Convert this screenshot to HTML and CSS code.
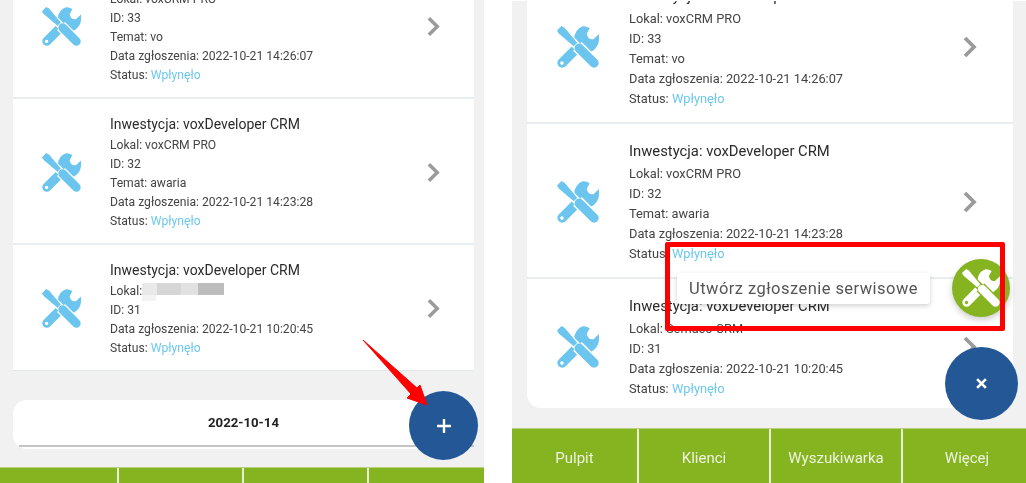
FILE: index.html
```html
<!DOCTYPE html>
<html lang="pl">
<head>
<meta charset="utf-8">
<title>Zgłoszenia serwisowe</title>
<link rel="stylesheet" href="styles.css">
</head>
<body>
<svg class="defs" width="0" height="0" aria-hidden="true">
  <symbol id="tools" viewBox="0 0 39 39">
    <path class="t-fill" d="M24 .3A12 12 0 0 0 16 11.5L27 25A13 13 0 0 0 39 12.5L39 7.5 33.8 12.2Q28.6 13 27.6 7.2L30.4 2Q27 0 24 .3Z"/>
    <path class="t-line" stroke-width="9" d="M4.8 34.2 18 21"/>
    <path class="t-gap" stroke-width="7.6" d="M4 4 20 20"/>
    <path class="t-gap" stroke-width="11.4" d="M19 19 36 36"/>
    <path class="t-blade" d="M0 4.2 4.2 0 7 1.6 18.8 15.6 15.6 18.8 1.6 7Z"/>
    <path class="t-line" stroke-width="8.6" d="M20.6 20.6 34.4 34.4"/>
    <circle class="t-hole" cx="4.6" cy="34.4" r="1.7"/>
  </symbol>
  <symbol id="chev" viewBox="0 0 14 22">
    <path class="chev-path" d="M2 2 11 11 2 20"/>
  </symbol>
</svg>

<main class="stage">
  <section class="phone phone-a">
    <div class="list">
      <article class="row">
        <svg class="ico"><use href="#tools"/></svg>
        <div class="info">
          <h3>Inwestycja: voxDeveloper CRM</h3>
          <p>Lokal: voxCRM PRO</p><p>ID: 33</p><p>Temat: vo</p>
          <p>Data zgłoszenia: 2022-10-21 14:26:07</p>
          <p>Status: <span class="st">Wpłynęło</span></p>
        </div>
        <svg class="chev"><use href="#chev"/></svg>
      </article>
      <article class="row">
        <svg class="ico"><use href="#tools"/></svg>
        <div class="info">
          <h3>Inwestycja: voxDeveloper CRM</h3>
          <p>Lokal: voxCRM PRO</p><p>ID: 32</p><p>Temat: awaria</p>
          <p>Data zgłoszenia: 2022-10-21 14:23:28</p>
          <p>Status: <span class="st">Wpłynęło</span></p>
        </div>
        <svg class="chev"><use href="#chev"/></svg>
      </article>
      <article class="row">
        <svg class="ico"><use href="#tools"/></svg>
        <div class="info">
          <h3>Inwestycja: voxDeveloper CRM</h3>
          <p>Lokal:<span class="redact"></span></p><p>ID: 31</p>
          <p>Data zgłoszenia: 2022-10-21 10:20:45</p>
          <p>Status: <span class="st">Wpłynęło</span></p>
        </div>
        <svg class="chev"><use href="#chev"/></svg>
      </article>
    </div>
    <div class="date-card"><div class="date-label">2022-10-14</div></div>
    <nav class="nav"><span></span><span></span><span></span><span></span></nav>
    <button class="fab fab-plus" aria-label="Dodaj"><svg viewBox="0 0 14 14"><path d="M7 0V14M0 7H14"/></svg></button>
    <svg class="arrow" viewBox="0 0 72 72"><path d="M3 4 57 52 60 49 67 69 47 62 51 58Z"/></svg>
  </section>

  <section class="phone phone-b">
    <div class="list">
      <article class="row">
        <svg class="ico"><use href="#tools"/></svg>
        <div class="info">
          <h3>Inwestycja: voxDeveloper CRM</h3>
          <p>Lokal: voxCRM PRO</p><p>ID: 33</p><p>Temat: vo</p>
          <p>Data zgłoszenia: 2022-10-21 14:26:07</p>
          <p>Status: <span class="st">Wpłynęło</span></p>
        </div>
        <svg class="chev"><use href="#chev"/></svg>
      </article>
      <article class="row">
        <svg class="ico"><use href="#tools"/></svg>
        <div class="info">
          <h3>Inwestycja: voxDeveloper CRM</h3>
          <p>Lokal: voxCRM PRO</p><p>ID: 32</p><p>Temat: awaria</p>
          <p>Data zgłoszenia: 2022-10-21 14:23:28</p>
          <p>Status: <span class="st">Wpłynęło</span></p>
        </div>
        <svg class="chev"><use href="#chev"/></svg>
      </article>
      <article class="row">
        <svg class="ico"><use href="#tools"/></svg>
        <div class="info">
          <h3>Inwestycja: voxDeveloper CRM</h3>
          <p>Lokal: Semaco CRM</p><p>ID: 31</p>
          <p>Data zgłoszenia: 2022-10-21 10:20:45</p>
          <p>Status: <span class="st">Wpłynęło</span></p>
        </div>
        <svg class="chev"><use href="#chev"/></svg>
      </article>
    </div>
    <nav class="nav"><span>Pulpit</span><span>Klienci</span><span>Wyszukiwarka</span><span>Więcej</span></nav>
    <div class="tip">Utwórz zgłoszenie serwisowe</div>
    <button class="fab fab-green" aria-label="Utwórz zgłoszenie serwisowe"><svg class="ico-w"><use href="#tools"/></svg></button>
    <button class="fab fab-close" aria-label="Zamknij"><svg viewBox="0 0 10 10"><path d="M1 1 9 9M9 1 1 9"/></svg></button>
    <div class="mark"></div>
  </section>
</main>
</body>
</html>
```

FILE: styles.css
```css
* { box-sizing: border-box; }
html, body { margin: 0; padding: 0; background: #fff; }
body { width: 1026px; height: 483px; overflow: hidden; font-family: Roboto, "Liberation Sans", sans-serif; color: #333; }
.defs { display: block; position: absolute; }
.stage { display: flex; gap: 28px; height: 483px; filter: blur(.45px); }

.phone { position: relative; display: flex; flex-direction: column; overflow: hidden; background: #f1f1f1; }
.phone-a { width: 484px; height: 483px; }
.phone-b { width: 514px; height: 482px; margin-top: 1px; }

.list { display: flex; flex-direction: column; background: #fff; }
.phone-a .list { margin: -47px 10px 0 13px; }
.phone-b .list { margin: -32px 13px 0 15px; border-radius: 0 0 14px 14px; }

.row { display: flex; align-items: center; border-bottom: 2px solid #e8edf2; }
.row:last-child { border-bottom: 0; }
.phone-a .row { padding: 14px 34px 12px 29px; }
.phone-b .row { padding: 16px 36px 12.5px 30px; }
.phone-a .row:last-child { border-bottom: 1px solid #dfe6ee; }
.phone-b .row:last-child { padding-bottom: 9px; }

.ico { flex: none; display: block; --tool: #6cc5ee; --gap: #fff; }
.phone-a .ico { width: 39px; height: 39px; margin-right: 29px; }
.phone-b .ico { width: 42px; height: 42px; margin-right: 30px; }
.t-fill, .t-blade { fill: var(--tool); }
.t-line { fill: none; stroke: var(--tool); stroke-linecap: round; }
.t-gap { fill: none; stroke: var(--gap); stroke-linecap: butt; }
.t-hole { fill: var(--gap); }

.info { flex: 1; min-width: 0; }
.info h3 { margin: 0; font-weight: 400; color: #2b2b2b; }
.info p { margin: 0; color: #444; }
.phone-a h3 { font-size: 14px; line-height: 22px; margin-bottom: 1px; }
.phone-a p { font-size: 12.15px; line-height: 19px; }
.phone-b h3 { font-size: 14.8px; line-height: 22px; margin-bottom: 2px; }
.phone-b p { font-size: 12.8px; line-height: 20.1px; }
.st { color: #6cc8f0; }

.redact { display: inline-block; width: 82px; height: 18px; margin-bottom: -6px; vertical-align: baseline;
  background:
    linear-gradient(90deg, #e9e9e9 0 18%, #d6d6d6 18% 48%, #e1e1e1 48% 68%, #bdbdbd 68% 100%) 0 0 / 100% 12px no-repeat,
    linear-gradient(#f3f3f3, #f3f3f3) 0 12px / 17% 6px no-repeat; }

.chev { flex: none; display: block; }
.phone-a .chev { width: 13px; height: 21px; }
.phone-b .chev { width: 14px; height: 22px; }
.chev-path { fill: none; stroke: #9b9b9b; stroke-width: 3.8; }

.date-card { margin: 29px 10px 0 13px; height: 49px; padding: 0 0 2px 6px; background: #fff; border-radius: 14px; }
.date-label { height: 47px; padding-right: 6px; display: flex; align-items: center; justify-content: center;
  border-bottom: 2px solid #c4c4c4; font-size: 13.2px; font-weight: 700; color: #222; }

.nav { margin-top: auto; display: grid; flex: none; background: #86b420; color: #eef4df; border-top: 1px solid #b5d17c; }
.phone-a .nav { height: 16px; grid-template-columns: 119px 125px 125px 1fr; }
.phone-b .nav { height: 55px; grid-template-columns: 127px 132px 132px 1fr; }
.nav span { display: flex; align-items: center; justify-content: center; padding-top: 3px; border-right: 2px solid #e8efd6; font-size: 15px; }
.nav span:last-child { border-right: 0; padding-left: 5px; }

.fab { position: absolute; display: flex; align-items: center; justify-content: center; padding: 0; border: 0; border-radius: 50%; }
.fab svg { display: block; }
.fab-plus { left: 409px; top: 391px; width: 69px; height: 69px; background: #235796; }
.fab-plus svg { width: 14px; height: 14px; }
.fab-plus path, .fab-close path { fill: none; stroke: #fff; stroke-width: 2.4; }
.fab-close { left: 433px; top: 346px; width: 73px; height: 73px; background: #235796; }
.fab-close svg { width: 11px; height: 11px; }
.fab-green { left: 440px; top: 258px; width: 58px; height: 58px; background: #86b420; box-shadow: 0 3px 6px rgba(0,0,0,.2); }
.ico-w { width: 38px; height: 38px; --tool: #fff; --gap: #86b420; }

.arrow { position: absolute; left: 360px; top: 336px; width: 72px; height: 72px; }
.arrow path { fill: #f00; stroke: #f00; stroke-width: 1; stroke-linejoin: round; }

.tip { position: absolute; left: 165px; top: 272px; width: 253px; height: 31px; display: flex; align-items: center; justify-content: center;
  background: #fff; border-radius: 3px; box-shadow: 0 2px 5px rgba(0,0,0,.18); font-size: 16.5px; color: #555; letter-spacing: .45px; white-space: nowrap; }
.mark { position: absolute; left: 153px; top: 241px; width: 340px; height: 89px; border: 5px solid #f00; border-radius: 2px; }
```
